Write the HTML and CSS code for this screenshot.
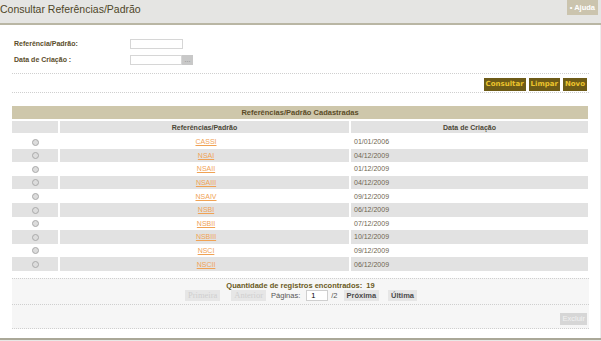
FILE: index.html
```html
<!DOCTYPE html>
<html>
<head>
<link rel="stylesheet" href="styles.css">
</head>
<body>
  <div class="topo">
    <h1 class="topo__titulo">Consultar Referências/Padrão</h1>
    <a class="topo__ajuda" href="#">&bull; Ajuda</a>
  </div>

  <div class="conteudo">
    <form class="filtro">
      <div class="filtro__linha">
        <label class="filtro__label">Referência/Padrão:</label>
        <input class="filtro__input" type="text">
      </div>
      <div class="filtro__linha">
        <label class="filtro__label">Data de Criação :</label>
        <input class="filtro__input filtro__input--data" type="text"><button class="filtro__cal" type="button">...</button>
      </div>
    </form>

    <div class="acoes">
      <button class="btn">Consultar</button>
      <button class="btn">Limpar</button>
      <button class="btn">Novo</button>
    </div>

    <table class="lista">
      <tr><th class="lista__titulo" colspan="3">Referências/Padrão Cadastradas</th></tr>
      <tr class="lista__cab">
        <th class="lista__sel"></th>
        <th>Referências/Padrão</th>
        <th>Data de Criação</th>
      </tr>
      <tr><td class="lista__sel"><span class="radio"></span></td><td class="lista__ref"><a href="#">CASSI</a></td><td>01/01/2006</td></tr>
      <tr class="par"><td class="lista__sel"><span class="radio"></span></td><td class="lista__ref"><a href="#">NSAI</a></td><td>04/12/2009</td></tr>
      <tr><td class="lista__sel"><span class="radio"></span></td><td class="lista__ref"><a href="#">NSAII</a></td><td>01/12/2009</td></tr>
      <tr class="par"><td class="lista__sel"><span class="radio"></span></td><td class="lista__ref"><a href="#">NSAIII</a></td><td>04/12/2009</td></tr>
      <tr><td class="lista__sel"><span class="radio"></span></td><td class="lista__ref"><a href="#">NSAIV</a></td><td>09/12/2009</td></tr>
      <tr class="par"><td class="lista__sel"><span class="radio"></span></td><td class="lista__ref"><a href="#">NSBI</a></td><td>06/12/2009</td></tr>
      <tr><td class="lista__sel"><span class="radio"></span></td><td class="lista__ref"><a href="#">NSBII</a></td><td>07/12/2009</td></tr>
      <tr class="par"><td class="lista__sel"><span class="radio"></span></td><td class="lista__ref"><a href="#">NSBIII</a></td><td>10/12/2009</td></tr>
      <tr><td class="lista__sel"><span class="radio"></span></td><td class="lista__ref"><a href="#">NSCI</a></td><td>09/12/2009</td></tr>
      <tr class="par"><td class="lista__sel"><span class="radio"></span></td><td class="lista__ref"><a href="#">NSCII</a></td><td>06/12/2009</td></tr>
    </table>

    <div class="paginacao">
      <div class="paginacao__total">Quantidade de registros encontrados: &nbsp;19</div>
      <div class="paginacao__nav">
        <button class="pbtn pbtn--off">Primeira</button>
        <button class="pbtn pbtn--off pbtn--ant">Anterior</button>
        <span class="paginacao__txt">Páginas:</span>
        <input class="paginacao__input" type="text" value="1">
        <span class="paginacao__txt paginacao__tot">/2</span>
        <button class="pbtn">Próxima</button>
        <button class="pbtn pbtn--ult">Última</button>
      </div>
    </div>

    <div class="rodape">
      <button class="excluir">Excluir</button>
    </div>
  </div>
  <div class="base"></div>
</body>
</html>
```

FILE: styles.css
```css
* { box-sizing: border-box; }

body {
  margin: 0;
  background: #fff;
  font-family: "Liberation Sans", Arial, sans-serif;
  width: 601px;
  height: 341px;
  overflow: hidden;
}

.topo {
  display: flex;
  justify-content: space-between;
  align-items: flex-start;
  height: 25px;
  background: #e5e5e3;
  border-bottom: 2px solid #b9b6a4;
}

.topo__titulo {
  margin: 3px 0 0 0;
  font-size: 10.5px;
  font-weight: normal;
  color: #4e4528;
}

.topo__ajuda {
  margin-right: 3px;
  background: #cbc4ae;
  color: #fff;
  font-size: 7.5px;
  font-weight: bold;
  text-decoration: none;
  padding: 2px 3px;
  height: 15px;
  line-height: 11px;
}

.conteudo {
  padding: 0 11px 0 12px;
  border-right: 1px solid #ececec;
  height: 313px;
}

.filtro {
  padding: 11px 0 5px 2px;
  border-bottom: 1px dotted #cfcfcf;
}

.filtro__linha {
  display: flex;
  align-items: center;
  height: 15px;
  margin-bottom: 1px;
}

.filtro__label {
  width: 116px;
  font-size: 7px;
  font-weight: bold;
  color: #5b4d2b;
}

.filtro__input {
  width: 53px;
  height: 10px;
  border: 1px solid #d6d6d6;
  padding: 0;
  background: #fff;
}

.filtro__input--data {
  width: 52px;
}

.filtro__cal {
  width: 11px;
  height: 10px;
  border: none;
  padding: 0;
  background: #c8c8c8;
  color: #888;
  font-size: 7px;
  line-height: 6px;
}

.acoes {
  display: flex;
  justify-content: flex-end;
  gap: 3px;
  padding: 4px 2px 1px 0;
  border-bottom: 1px dotted #cfcfcf;
}

.btn {
  height: 13px;
  padding: 0 2px;
  border: none;
  background: #6d5b17;
  color: #ebc42c;
  font-family: "DejaVu Sans", Verdana, sans-serif;
  font-size: 7px;
  font-weight: bold;
  line-height: 13px;
}

.lista {
  width: 576px;
  margin-top: 13px;
  border-collapse: collapse;
  font-size: 7px;
}

.lista th,
.lista td {
  box-sizing: content-box;
  padding: 0;
  height: 13.6px;
}

.lista__titulo {
  background: #cec7ab;
  color: #5a4b27;
  font-size: 7.5px;
  height: 13px !important;
  border-bottom: 2px solid #fff;
}

.lista__cab th {
  background: #e2e2e2;
  color: #4a4636;
  font-weight: bold;
  height: 12px !important;
  border-bottom: 2px solid #fff;
}

.lista__cab th + th,
.lista td + td {
  border-left: 2px solid #fff;
}

.lista__sel {
  width: 46px;
  text-align: center;
}

.lista__cab th:nth-child(2) {
  width: 289px;
}

.lista td {
  color: #6e6550;
  padding-left: 3px;
}

.lista td.lista__sel {
  padding-left: 0;
}

.lista .par td {
  background: #e2e2e2;
}

.lista__ref {
  text-align: center;
}

.lista__ref a {
  color: #f0a254;
}

.radio {
  display: inline-block;
  width: 7px;
  height: 7px;
  border-radius: 50%;
  border: 1px solid #a9a9a9;
  background: #dcdcdc;
  vertical-align: middle;
}

.paginacao {
  margin-top: 7px;
  border-top: 1px dotted #cfcfcf;
  border-bottom: 1px dotted #cfcfcf;
  background: #f6f6f6;
  padding: 2px 0 2px;
  text-align: center;
}

.paginacao__total {
  font-size: 7.5px;
  font-weight: bold;
  color: #6a5a1c;
  height: 9px;
  line-height: 9px;
}

.paginacao__nav {
  display: flex;
  justify-content: center;
  align-items: center;
  height: 12px;
  padding-left: 1px;
}

.pbtn {
  height: 11px;
  padding: 0 3px;
  border: none;
  background: #e6e6e6;
  color: #4a4a4a;
  font-family: "Liberation Sans", Arial, sans-serif;
  font-size: 7.5px;
  font-weight: bold;
  line-height: 11px;
}

.pbtn--off {
  color: #cfcfcf;
  font-family: "Liberation Serif", serif;
  font-size: 8.5px;
  font-weight: normal;
}

.pbtn--ant {
  margin-left: 11px;
  margin-right: 5px;
}

.pbtn--ult {
  margin-left: 9px;
}

.paginacao__txt {
  font-size: 7.5px;
  color: #555;
}

.paginacao__tot {
  margin: 0 6px 0 3px;
}

.paginacao__input {
  width: 22px;
  height: 11px;
  border: 1px solid #cfcfcf;
  padding: 0 0 0 4px;
  font-size: 7.5px;
  margin-left: 6px;
}

.rodape {
  display: flex;
  justify-content: flex-end;
  padding: 8px 2px 3px 0;
  height: 24px;
  background: #f6f6f6;
  border-bottom: 1px dotted #cfcfcf;
}

.excluir {
  height: 12px;
  padding: 0 2px;
  border: none;
  background: #d6d6d6;
  color: #f2f2f2;
  font-family: "Liberation Sans", Arial, sans-serif;
  font-size: 7.5px;
  line-height: 12px;
}

.base {
  height: 3px;
  border-top: 2px solid #aaa898;
  background: #e8e8e6;
}
```
